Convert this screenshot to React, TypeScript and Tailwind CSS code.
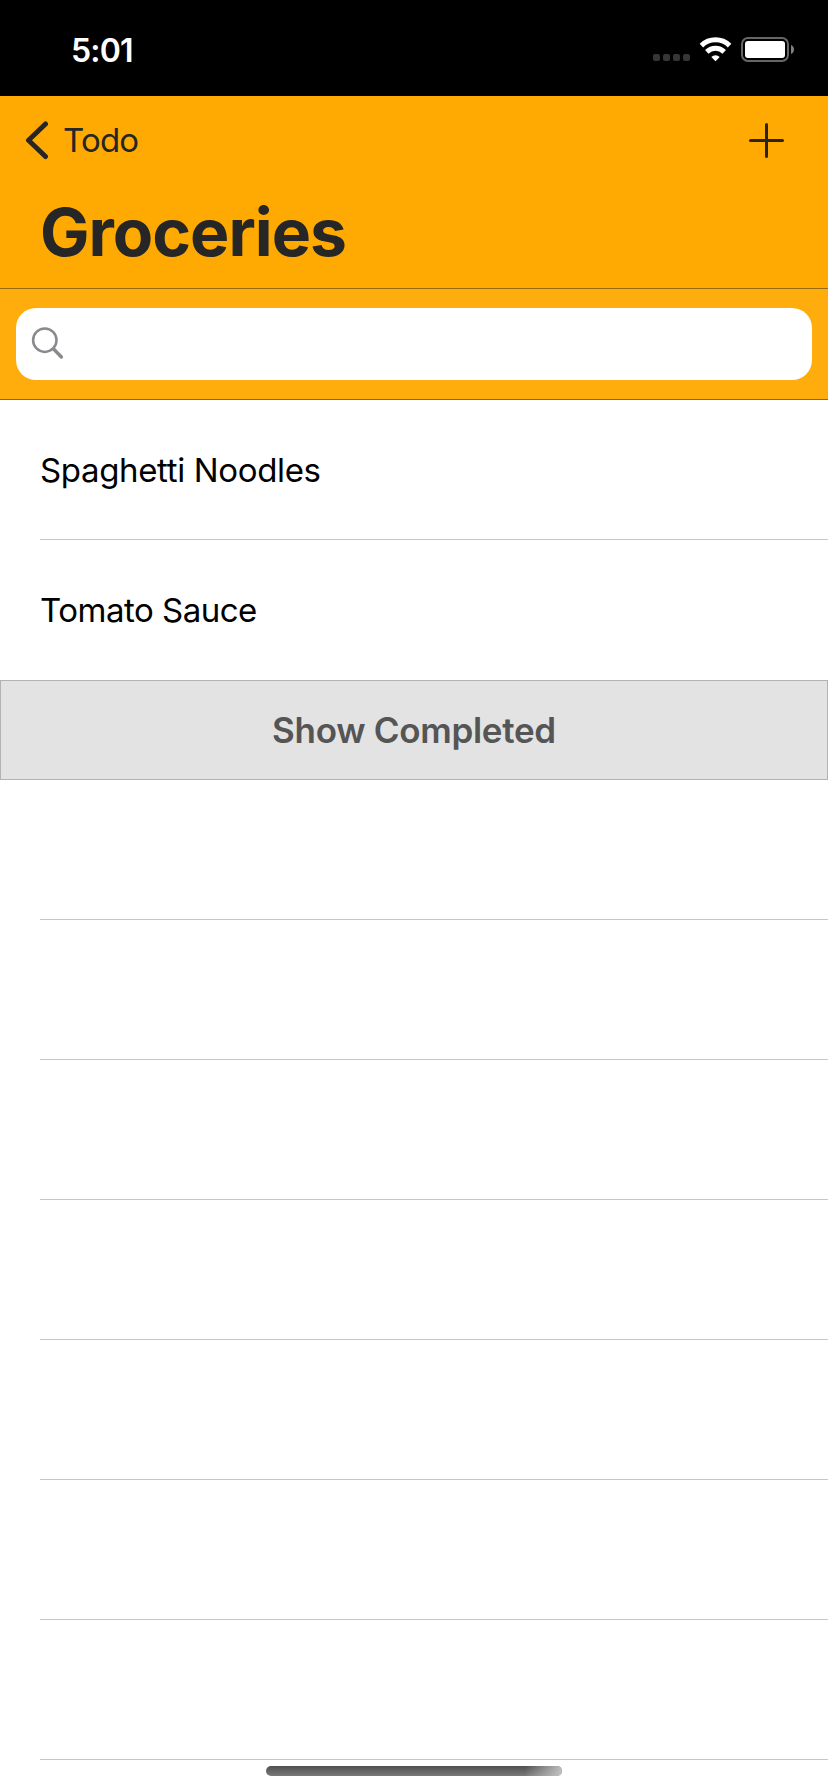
const items = [
  { name: 'Spaghetti Noodles', className: 'flex h-[140px] items-center border-b border-[#c6c6c8] tracking-[-0.35px]' },
  { name: 'Tomato Sauce', className: 'flex h-[140px] items-center tracking-[-0.5px]' },
];
const emptyRows = [1, 2, 3, 4, 5, 6, 7];

function StatusBar() {
  return (
    <div className="flex h-24 justify-between bg-black pr-[34px] pl-[71px] text-white">
      <span className="mt-[30px] text-[32px] leading-[41px] font-semibold tracking-[-0.8px]">5:01</span>
      <svg className="mt-[30px]" width="141" height="40" viewBox="653 30 141 40" fill="none">
        <g fill="#363636">
          <rect x="653" y="54" width="7" height="7" rx="2" />
          <rect x="663" y="54" width="7" height="7" rx="2" />
          <rect x="673" y="54" width="7" height="7" rx="2" />
          <rect x="683" y="54" width="7" height="7" rx="2" />
        </g>
        <g stroke="#fff" strokeWidth="5">
          <path d="M701.400 45.600a20.200 20.200 0 0 1 28.200 0" />
          <path d="M706.800 51.900a12.400 12.400 0 0 1 17.400 0" />
        </g>
        <path d="M715.500 61.200l-4.200-4.300a6.200 6.200 0 0 1 8.400 0z" fill="#fff" />
        <rect x="742" y="38" width="46" height="23" rx="6" stroke="#666" strokeWidth="2" />
        <rect x="745" y="41" width="40" height="17" rx="3" fill="#fff" />
        <path d="M791 45c4 1.600 4 7.400 0 9z" fill="#808080" />
      </svg>
    </div>
  );
}

function Header() {
  return (
    <header className="flex h-[193px] flex-col border-b border-[#996c14] bg-[#ffaa03] text-[#262626]">
      <div className="flex h-[88px] justify-between pr-[42px] pl-[24px]">
        <button className="flex">
          <svg className="mt-[24px]" width="26" height="40" viewBox="24 120 26 40" fill="none" stroke="currentColor" strokeWidth="5" strokeLinecap="round" strokeLinejoin="round">
            <path d="M45.500 124L28.500 140.200l17 16.300" />
          </svg>
          <span className="mt-[24px] ml-[13px] text-[33px] leading-10 tracking-[-0.8px]">Todo</span>
        </button>
        <button className="flex" aria-label="Add">
          <svg className="mt-[24px]" width="40" height="40" viewBox="746 120 40 40" fill="none" stroke="currentColor" strokeWidth="3" strokeLinecap="round">
            <path d="M750.500 140.500h32M766.500 124.500v32" />
          </svg>
        </button>
      </div>
      <h1 className="mt-[8px] ml-[40px] text-[66px] leading-[80px] font-bold tracking-[-1px]">Groceries</h1>
    </header>
  );
}

function SearchBar() {
  return (
    <div className="h-[111px] border-b border-[#996606] bg-[#ffad0d] px-4 pt-[19px]">
      <div className="flex h-[72px] rounded-[20px] bg-white pt-4 pl-3">
        <svg width="40" height="40" viewBox="28 324 40 40" fill="none" stroke="#8a8a8e" strokeLinecap="round">
          <circle cx="44.800" cy="340.200" r="11.700" strokeWidth="2.500" />
          <path d="M53.600 349l7.800 8" strokeWidth="3.400" />
        </svg>
      </div>
    </div>
  );
}

export default function App() {
  return (
    <div className="relative h-[1792px] w-[828px] overflow-hidden bg-white font-[Inter,sans-serif]">
      <StatusBar />
      <Header />
      <SearchBar />
      <ul className="pl-10 text-[33px] text-black">
        {items.map((item) => (
          <li key={item.name} className={item.className}>
            <span className="pt-[2px]">{item.name}</span>
          </li>
        ))}
      </ul>
      <button className="flex h-[100px] w-full items-center justify-center border border-[#b3b3b3] bg-[#e3e3e3] text-[35px] font-semibold tracking-[-0.3px] text-[#555]">
        Show Completed
      </button>
      {emptyRows.map((row) => (
        <div key={row} className="ml-10 h-[140px] border-b border-[#c6c6c8]" />
      ))}
      <div className="absolute top-[1766px] left-[266px] h-[10px] w-[296px] overflow-hidden rounded-full bg-linear-to-b from-[#505050] to-[#7a7a7a]">
        <div className="ml-auto h-full w-[36px] bg-linear-[105deg] from-[#c4c4c4]/0 to-[#c4c4c4]" />
      </div>
    </div>
  );
}
